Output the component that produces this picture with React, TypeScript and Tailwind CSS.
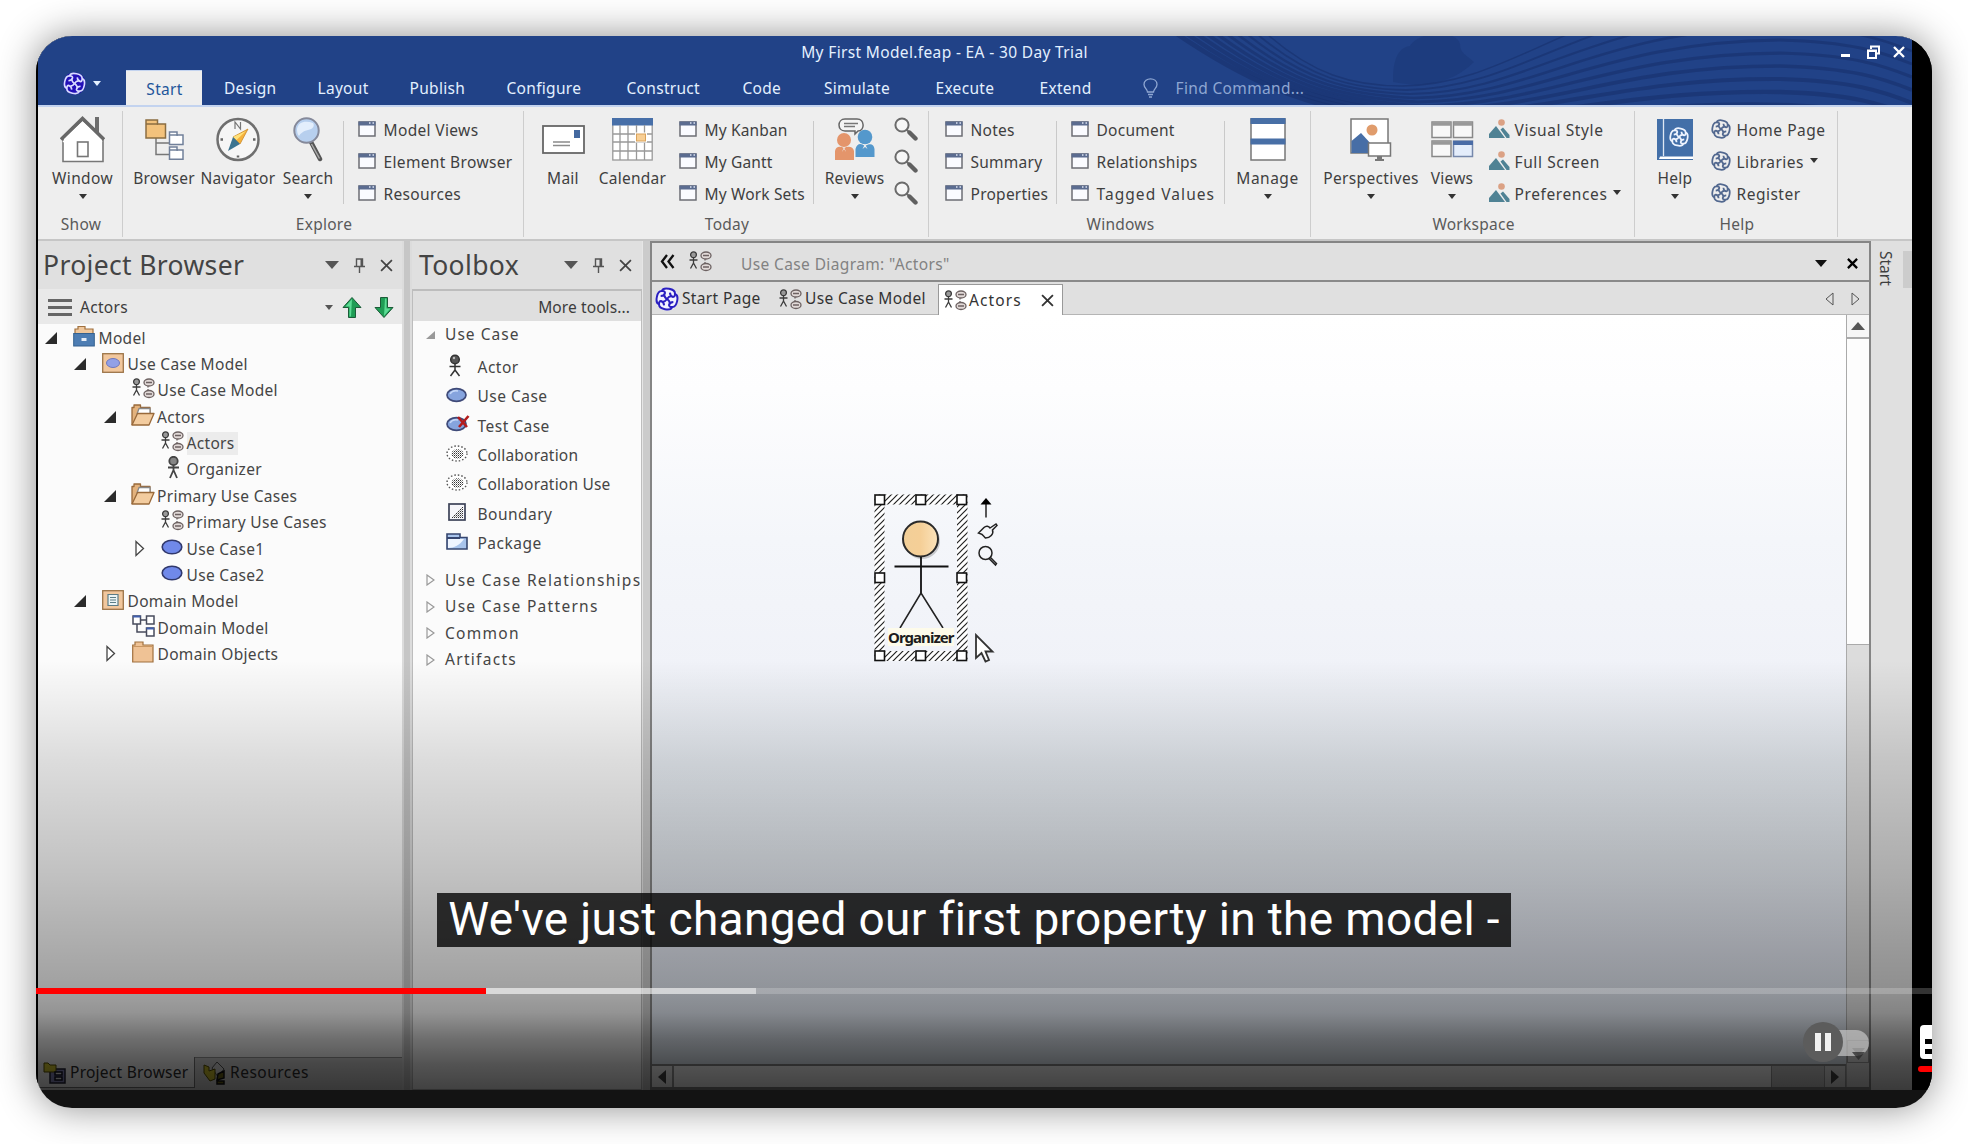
import React from "react";

/* ---------- icons ---------- */

function Swirl({ size, color, bg = "none", w = 1.9 }: { size: number; color: string; bg?: string; w?: number }) {
  return (
    <svg width={size} height={size} viewBox="0 0 24 24" fill="none" stroke={color} strokeWidth={w} strokeLinejoin="round">
      <circle cx="12" cy="12" r="11.5" fill={bg} stroke="none" />
      <g transform="rotate(12 12 12)">
        <path d="M5.300 5.300C5.800 0.400 18.200 0.400 18.700 5.300C23.600 5.800 23.600 18.200 18.700 18.700C18.200 23.600 5.800 23.600 5.300 18.700C0.400 18.200 0.400 5.800 5.300 5.300Z" />
        {[0, 90, 180, 270].map((a) => (
          <path key={a} transform={`rotate(${a} 12 12)`} d="M12 12C13.500 8.500 15.500 8 17.500 8.800M18.700 5.300C19.300 7 18.800 8.500 17.500 8.800C15.500 8.600 14 7 13.500 5.200" />
        ))}
      </g>
    </svg>
  );
}

const Caret = ({ className = "" }: { className?: string }) => (
  <svg className={className} width="8" height="5" viewBox="0 0 8 5"><path d="M0 0H8L4 5Z" fill="currentColor" /></svg>
);

const WinIcon = () => (
  <svg width="18" height="16" viewBox="0 0 18 16">
    <rect x="1" y="1" width="16" height="14" fill="#fafbff" stroke="#6c6e74" strokeWidth="1.500" />
    <path d="M0.500 0.500H17.500V4.500H0.500Z" fill="#5b6c90" />
    <path d="M11 2H12.500M14.500 2H16" stroke="#dfe5f2" strokeWidth="1.300" />
  </svg>
);

const Picture = () => (
  <svg width="21" height="20" viewBox="0 0 21 20">
    <circle cx="12.500" cy="3.500" r="3.300" fill="#dba184" />
    <path d="M0 19V15L7 7L16 19Z" fill="#4f8294" />
    <path d="M11.500 10.500L14 8.500L20.500 16V19H17.500Z" fill="#4f8294" />
  </svg>
);

const House = () => (
  <svg width="45" height="47" viewBox="0 0 45 47" fill="none">
    <path d="M35 17V1H39V20Z" fill="#6d6d6d" />
    <path d="M3 22V45.500H43V22L22.500 4Z" fill="#fff" stroke="#777" strokeWidth="1.600" />
    <path d="M1 23.500L22.500 2.500L44 23.500" stroke="#686868" strokeWidth="3.400" />
    <path d="M3 26L22.500 7L42 26" stroke="#fff" strokeWidth="1.200" />
    <rect x="17.500" y="26" width="10.500" height="14.500" fill="#fff" stroke="#777" strokeWidth="1.600" />
  </svg>
);

const BrowserIcon = () => (
  <svg width="39" height="41" viewBox="0 0 39 41" fill="none" strokeWidth="1.500">
    <path d="M11 19V35.500H24M11 24H24" stroke="#777" />
    <path d="M1 1H12.500V5H20.500V19H1Z" fill="#f3c27c" stroke="#8b6d42" />
    <path d="M1 5H13" stroke="#8b6d42" />
    <path d="M24.500 13H32V16H38V25.500H24.500Z" fill="#fff" stroke="#71809a" />
    <path d="M24.500 16H33" stroke="#71809a" />
    <path d="M24.500 28H32V31H38V40.300H24.500Z" fill="#fff" stroke="#71809a" />
    <path d="M24.500 31H33" stroke="#71809a" />
  </svg>
);

const Compass = () => (
  <svg width="44" height="45" viewBox="0 0 44 45" fill="none">
    <circle cx="22" cy="22.500" r="20.500" fill="#f6f6f6" stroke="#6f6f6f" strokeWidth="2.500" />
    <path d="M19 12V5L24.500 12V5" stroke="#777" strokeWidth="1.200" />
    <path d="M32 12L17 20L24 27Z" fill="#f6b23c" stroke="#c98a2b" strokeWidth="0.800" />
    <path d="M30 14L20.500 23L17 20Z" fill="#ffe27a" />
    <path d="M12 34L17 20L24 27Z" fill="#3c7490" />
    <path d="M4.500 22.500H7M37 22.500H39.500M22 38.500V40.500" stroke="#666" strokeWidth="2.500" />
  </svg>
);

const SearchBig = () => (
  <svg width="32" height="45" viewBox="0 0 32 45" fill="none">
    <path d="M19 25L28 42" stroke="#555" strokeWidth="4.500" strokeLinecap="round" />
    <path d="M19.500 27L27.500 41.500" stroke="#aaa" strokeWidth="1.500" />
    <circle cx="14.500" cy="13.500" r="12.200" fill="#b7cfee" stroke="#85899a" strokeWidth="2" />
    <path d="M5 12C6 5 13 3 21 6C23 9 21 12 16 13C11 14 8 17 7 19C5.500 17 5 15 5 12Z" fill="#e3eefc" />
  </svg>
);

const MailIcon = () => (
  <svg width="43" height="29" viewBox="0 0 43 29">
    <rect x="1" y="1" width="41" height="27" fill="#fff" stroke="#666" strokeWidth="1.800" />
    <rect x="32" y="5" width="6" height="8" fill="#44699f" />
    <path d="M11 17H28M11 20.500H28" stroke="#8b8b8b" strokeWidth="1.300" />
  </svg>
);

const CalendarIcon = () => (
  <svg width="41" height="43" viewBox="0 0 41 43">
    <rect x="0.800" y="1" width="39.400" height="41" fill="#fff" stroke="#999" strokeWidth="1.300" />
    <path d="M0 0H41V7.500H0Z" fill="#476fa8" />
    <path d="M8 7V42M16 7V42M24.500 7V42M32.500 7V42M1 16H40M1 24H40M1 33H40" stroke="#999" strokeWidth="1.300" />
    <rect x="23" y="14.500" width="12" height="10" fill="#fff" />
    <rect x="24.500" y="16" width="9" height="7" fill="#f8cf95" stroke="#d9a25b" />
  </svg>
);

const ReviewsIcon = () => (
  <svg width="40" height="42" viewBox="0 0 40 42" fill="none">
    <path d="M10 1H22C30 1 30 13 23 13L20 16V13H10C2 13 2 1 10 1Z" fill="#f4f4f4" stroke="#666" strokeWidth="1.500" />
    <path d="M9 5.500H23M9 8.500H20" stroke="#777" strokeWidth="1.300" />
    <circle cx="9" cy="22" r="7" fill="#e4956b" />
    <path d="M0 42V33C1 28 5 28 9 30C13 28 18 28 19 33V42Z" fill="#e4956b" />
    <circle cx="30" cy="19" r="7.300" fill="#5498cc" />
    <path d="M20.500 39V31C22 25 26 25 30 28C35 25 39 26 39.500 31V39Z" fill="#5498cc" />
    <path d="M9 29L7 34L9 31L11 34ZM30 26L27.500 31L30 29L32.500 31Z" fill="#eee" />
  </svg>
);

const Mag = () => (
  <svg width="24" height="24" viewBox="0 0 24 24" fill="none">
    <circle cx="8" cy="8" r="6.600" fill="#f6f6f6" stroke="#6b6b6b" strokeWidth="2" />
    <path d="M12.500 12.500L15 15" stroke="#6b6b6b" strokeWidth="2" />
    <path d="M15.500 15.500L21.500 21.500" stroke="#606060" strokeWidth="4.400" strokeLinecap="round" />
  </svg>
);

const ManageIcon = () => (
  <svg width="36" height="43" viewBox="0 0 36 43">
    <rect x="1" y="1" width="34" height="41" fill="#fff" stroke="#777" strokeWidth="1.500" />
    <path d="M0.500 0H35.500V6H0.500ZM0.500 20.500H35.500V26.500H0.500Z" fill="#486fa6" />
  </svg>
);

const PerspectivesIcon = () => (
  <svg width="42" height="43" viewBox="0 0 42 43">
    <rect x="1" y="1" width="37" height="34" fill="#fff" stroke="#777" strokeWidth="1.500" />
    <circle cx="22" cy="12" r="5.500" fill="#e09c6c" />
    <path d="M1.500 35V23L11 15L22 27V35Z" fill="#476ea6" />
    <rect x="18.500" y="25" width="22" height="13" fill="#fff" stroke="#777" strokeWidth="1.500" />
    <path d="M27 38H32V41H34V43H25V41H27Z" fill="#777" />
  </svg>
);

const ViewsIcon = () => (
  <svg width="43" height="37" viewBox="0 0 43 37" strokeWidth="1.500">
    <rect x="1" y="1" width="19" height="15.500" fill="#f8f8f8" stroke="#888" />
    <rect x="22.500" y="1" width="19" height="15.500" fill="#f8f8f8" stroke="#888" />
    <rect x="1" y="20" width="19" height="15.500" fill="#f8f8f8" stroke="#888" />
    <rect x="22.500" y="20" width="19" height="15.500" fill="#e4edfb" stroke="#7688ab" />
    <path d="M1 3H20M22.500 3H41.500M1 22H20" stroke="#999" strokeWidth="3.500" />
    <path d="M22 22H42" stroke="#4a6ca6" strokeWidth="4" />
  </svg>
);

const BookIcon = () => (
  <div className="relative h-[41px] w-9">
    <svg className="absolute inset-0" width="36" height="41" viewBox="0 0 36 41">
      <path d="M0 0H36V41H0Z" fill="#436fa8" />
      <path d="M6.500 0V37" stroke="#dfe7f3" strokeWidth="1.300" />
      <path d="M3 37.500H36V40H2Z" fill="#fff" />
    </svg>
    <div className="absolute left-[11.500px] top-2"><Swirl size={20} color="#eef4ff" w={2.1} /></div>
  </div>
);

const DiagramIcon = () => (
  <svg width="23" height="21" viewBox="0 0 23 21" fill="none" stroke="#3c3c3c" strokeWidth="1.300">
    <circle cx="4.500" cy="3.800" r="2.900" fill="#999" />
    <path d="M4.500 7V12.500M0.500 9H8.500M4.500 12L1.500 17.500M4.500 12L7.500 17.500" />
    <g stroke="#6d6262"><ellipse cx="17" cy="4.500" rx="5" ry="3.500" fill="#e2dad8" /><ellipse cx="17" cy="16" rx="5" ry="3.500" fill="#e2dad8" /><path d="M14 4.500H20M14 16H20M16 8V9.500M16 11V12.500" /></g>
  </svg>
);

const ModelIcon = () => (
  <svg width="22" height="22" viewBox="0 0 22 22">
    <path d="M2 9V4H5V1.500H12V4H20V9Z" fill="#efc79c" stroke="#a0713f" strokeWidth="1.200" />
    <rect x="0.700" y="8.500" width="20.600" height="12.500" fill="#4d7db3" stroke="#34618f" />
    <path d="M8.500 13H13.500V16H8.500Z" fill="#e7eef7" />
  </svg>
);
const UcPkg = () => (
  <svg width="22" height="20" viewBox="0 0 22 20">
    <rect x="0.700" y="0.700" width="20.600" height="18.600" fill="#f1c79d" stroke="#9c7448" strokeWidth="1.300" />
    <ellipse cx="11" cy="10" rx="6.500" ry="4.500" fill="#92a0e6" stroke="#7078bb" />
  </svg>
);
const DmPkg = () => (
  <svg width="22" height="20" viewBox="0 0 22 20">
    <rect x="0.700" y="0.700" width="20.600" height="18.600" fill="#f1c79d" stroke="#9c7448" strokeWidth="1.300" />
    <path d="M6 4.500H16V15.500H6Z" fill="#eaf4f4" stroke="#5b7c86" strokeWidth="1.200" />
    <path d="M8 7.500H14M8 10H14M8 12.500H14" stroke="#5b7c86" strokeWidth="1.200" />
  </svg>
);
const OpenFolder = () => (
  <svg width="24" height="22" viewBox="0 0 24 22" strokeWidth="1.300" stroke="#99693a" strokeLinejoin="round">
    <path d="M1 21V3.500H3V1H9.500V3.500H19V10" fill="#e3b27d" />
    <path d="M8 4.500H19V10H6Z" fill="#fff" stroke="#888" />
    <path d="M1 21L6.500 9.500H23L18 21Z" fill="#f3cc9f" />
  </svg>
);
const Folder = () => (
  <svg width="22" height="22" viewBox="0 0 22 22">
    <path d="M0.700 21V4H3V1H11V4H21V21Z" fill="#efc295" stroke="#a0713f" strokeWidth="1.200" />
    <path d="M1 5.500H21" stroke="#c99763" strokeWidth="1" />
  </svg>
);
const Person = () => (
  <svg className="ml-[6px]" width="13" height="23" viewBox="0 0 13 23" fill="none" stroke="#444" strokeWidth="1.800">
    <circle cx="6.500" cy="5" r="4.200" fill="#858585" />
    <path d="M6.500 9V15M1 11.500H12M6.500 14L3 22M6.500 14L10 22" />
  </svg>
);
const Oval = () => (
  <svg width="22" height="16" viewBox="0 0 22 16"><ellipse cx="11" cy="8" rx="9.800" ry="6.800" fill="#7089ea" stroke="#30386c" strokeWidth="1.600" /></svg>
);
const ClassDiagram = () => (
  <svg width="23" height="22" viewBox="0 0 23 22" fill="#fff" stroke="#474b5c" strokeWidth="1.500">
    <path d="M9 5H15M5 9V17H14" fill="none" />
    <rect x="1" y="1" width="7.500" height="8" /><rect x="14.500" y="1" width="7.500" height="8" /><rect x="14.500" y="13" width="7.500" height="8" />
    <path d="M1 1.500H8.500M14.500 13.500H22" stroke="#405fae" strokeWidth="2" />
  </svg>
);

const ActorTool = () => (
  <svg className="ml-[3px]" width="12" height="23" viewBox="0 0 12 23" fill="none" stroke="#333" strokeWidth="1.500">
    <circle cx="6" cy="5.500" r="4.300" fill="#565656" /><circle cx="5" cy="4" r="1.200" fill="#bbb" stroke="none" />
    <path d="M6 10V16M0.500 12.500H11.500M6 16L1.500 22M6 16L10.500 22" />
  </svg>
);
const UseCaseTool = ({ test = false }: { test?: boolean }) => (
  <svg width="24" height="17" viewBox="0 0 24 17">
    <ellipse cx="10.500" cy="9" rx="9.500" ry="6.300" fill="#86a4de" stroke="#3f4a78" strokeWidth="1.700" />
    <path d="M4 8C6 4.500 10 4.500 12 5" stroke="#c6d8f8" strokeWidth="1.500" fill="none" />
    {test && <path d="M12 2L21 12M22.500 1L13 12" stroke="#b31c1c" strokeWidth="2.600" />}
  </svg>
);
const CollabTool = () => (
  <svg width="24" height="17" viewBox="0 0 24 17">
    <defs><pattern id="dots" width="2" height="2" patternUnits="userSpaceOnUse"><rect width="1" height="1" fill="#333" /><rect x="1" y="1" width="1" height="1" fill="#999" /></pattern></defs>
    <ellipse cx="11" cy="8.500" rx="10" ry="7.500" fill="#fff" stroke="#555" strokeWidth="1.400" strokeDasharray="1.500 2" />
    <ellipse cx="11.500" cy="9" rx="6" ry="4.800" fill="url(#dots)" />
  </svg>
);
const BoundaryTool = () => (
  <svg className="ml-[2px]" width="18" height="18" viewBox="0 0 18 18">
    <rect x="1" y="1" width="16" height="16" fill="#f6f6fa" stroke="#3c4257" strokeWidth="1.700" />
    <path d="M15 3V15H3Z" fill="url(#dots)" />
  </svg>
);
const PackageTool = () => (
  <svg width="22" height="17" viewBox="0 0 22 17">
    <path d="M1 16V1H14V4.500H21V16Z" fill="#a8c4ec" stroke="#36466f" strokeWidth="1.600" />
    <path d="M2 15V6H18C14 12 8 15 2 15Z" fill="#eff5ff" /><path d="M1 5H14" stroke="#36466f" strokeWidth="2" />
  </svg>
);

const PinIcon = () => (
  <svg width="11" height="15" viewBox="0 0 11 15" fill="none" stroke="#555" strokeWidth="1.400"><path d="M2.500 8V1H8.500V8M0 8.500H11M5.500 8.500V15M7.200 1V8" /></svg>
);
const XIcon = ({ size = 13, w = 2 }: { size?: number; w?: number }) => (
  <svg width={size} height={size} viewBox="0 0 12 12" fill="none" stroke="currentColor" strokeWidth={w}><path d="M1 1L11 11M11 1L1 11" /></svg>
);
const Tri = ({ open }: { open: boolean }) =>
  open ? (
    <svg width="12" height="12" viewBox="0 0 12 12"><path d="M12 0V12H0Z" fill="#2b2b2b" /></svg>
  ) : (
    <svg className="ml-px" width="12" height="17" viewBox="0 0 12 17"><path d="M2 1.500V15.500L9.500 8.500Z" fill="#fff" stroke="#444" strokeWidth="1.300" /></svg>
  );
const GreenArrow = ({ down = false }: { down?: boolean }) => (
  <svg className={down ? "rotate-180" : ""} width="20" height="21" viewBox="0 0 20 21">
    <path d="M10 0.500L19 10.500H13.500V20.500H6.500V10.500H1Z" fill="#1f9d55" stroke="#1b5c38" />
    <path d="M10 2L3.500 9.500H7.500V19.500H9Z" fill="#5bdb94" />
  </svg>
);

/* ---------- ribbon ---------- */

function Big({ icon, label, className, caret = false }: { icon: React.ReactNode; label: string; className: string; caret?: boolean }) {
  return (
    <div className={`flex shrink-0 flex-col items-center ${className}`}>
      <div className="flex h-12 items-center justify-center">{icon}</div>
      <span className="mt-[3px] whitespace-nowrap leading-6">{label}</span>
      {caret && <Caret className="mt-1 text-[#333]" />}
    </div>
  );
}

function List({ icon, items, className }: { icon: React.ReactNode; items: string[]; className: string }) {
  return (
    <div className={`flex shrink-0 flex-col ${className}`}>
      {items.map((t) => (
        <div key={t} className="flex h-8 items-center whitespace-nowrap">
          <span className="mb-1 w-[25.500px]">{icon}</span>
          <span className={t === "Tagged Values" ? "tracking-[1.050px]" : ""}>{t}</span>
          {(t === "Preferences" || t === "Libraries") && <Caret className="mb-[5px] ml-[6px] text-[#333]" />}
        </div>
      ))}
    </div>
  );
}

const Sep = () => <div className="mt-[6px] h-[83px] w-px shrink-0 bg-[#c9c9c9]" />;

function Group({ label, className, children }: { label: string; className: string; children: React.ReactNode }) {
  return (
    <div className={`flex shrink-0 flex-col ${className}`}>
      <div className="mt-1 flex h-[126px] flex-col border-r border-[#cdcdcd]">
        <div className="flex h-[100px] shrink-0 pt-[4px]">{children}</div>
        <div className="-mt-[2px] pl-[2px] text-center leading-[30px] text-[#5a5a5a]">{label}</div>
      </div>
    </div>
  );
}

function Ribbon() {
  return (
    <div className="flex h-[136px] shrink-0 overflow-hidden border-b-2 border-t-2 border-b-[#c6c6c6] border-t-[#c3d3ef] bg-[#eeeeee]">
      <Group label="Show" className="w-[85px]">
        <Big icon={<House />} label="Window" className="ml-[7px] w-[75px] tracking-[0.350px]" caret />
      </Group>
      <Group label="Explore" className="w-[401px]">
        <Big icon={<BrowserIcon />} label="Browser" className="ml-[7px] w-[68px]" />
        <Big icon={<Compass />} label="Navigator" className="w-20 tracking-[0.350px]" />
        <Big icon={<SearchBig />} label="Search" className="mr-[5px] w-[60px]" caret />
        <Sep />
        <List icon={<WinIcon />} items={["Model Views", "Element Browser", "Resources"]} className="ml-[14px] tracking-[0.350px]" />
      </Group>
      <Group label="Today" className="w-[405px]">
        <Big icon={<MailIcon />} label="Mail" className="ml-[9px] w-[60px]" />
        <Big icon={<CalendarIcon />} label="Calendar" className="w-[79px]" />
        <List icon={<WinIcon />} items={["My Kanban", "My Gantt", "My Work Sets"]} className="ml-[7px] w-[134px] tracking-[0.150px]" />
        <Sep />
        <Big icon={<ReviewsIcon />} label="Reviews" className="ml-[5px] w-[71px]" caret />
        <div className="ml-[4px] flex flex-col gap-2 pt-[2px]"><Mag /><Mag /><Mag /></div>
      </Group>
      <Group label="Windows" className="w-[382px]">
        <List icon={<WinIcon />} items={["Notes", "Summary", "Properties"]} className="ml-4 w-[111px]" />
        <Sep />
        <List icon={<WinIcon />} items={["Document", "Relationships", "Tagged Values"]} className="ml-[14px] w-[153px]" />
        <Sep />
        <Big icon={<ManageIcon />} label="Manage" className="ml-[7px] w-[71px] tracking-[0.500px]" caret />
      </Group>
      <Group label="Workspace" className="w-[324px]">
        <Big icon={<PerspectivesIcon />} label="Perspectives" className="ml-[9px] w-[102px] tracking-[0.350px]" caret />
        <Big icon={<ViewsIcon />} label="Views" className="w-[60px]" caret />
        <List icon={<Picture />} items={["Visual Style", "Full Screen", "Preferences"]} className="ml-[7px] tracking-[0.600px]" />
      </Group>
      <Group label="Help" className="w-[203px]">
        <Big icon={<BookIcon />} label="Help" className="ml-[10px] w-[60px]" caret />
        <List icon={<Swirl size={20} color="#52688f" w={2.1} />} items={["Home Page", "Libraries", "Register"]} className="ml-[6px] tracking-[0.500px]" />
      </Group>
    </div>
  );
}

const TABS: [string, string][] = [
  ["Design", "w-[93.500px]"],
  ["Layout", "w-[92px]"],
  ["Publish", "w-[97px]"],
  ["Configure", "w-[120px]"],
  ["Construct", "w-[116px]"],
  ["Code", "w-[81.500px]"],
  ["Simulate", "w-[111.500px]"],
  ["Execute", "w-[104px]"],
  ["Extend", "w-[103px]"],
];

function Header() {
  return (
    <div className="relative flex h-[69px] shrink-0 flex-col overflow-hidden bg-[#214287] text-[#e3f0ff]">
      <svg className="absolute right-0 top-0 overflow-visible" width="660" height="69" viewBox="0 0 660 69" fill="none" stroke="#17306c" strokeOpacity="0.6">
        <path d="M141 46C141 25 145 12 158 10C168 -6 205 -6 208 8C208 18 216 20 222 26C200 48 170 52 141 46Z" fill="#17306c" fillOpacity="0.35" stroke="none" />
        {[0, 1, 2, 3, 4, 5, 6, 7, 8, 9].map((i) => (
          <path
            key={i}
            strokeWidth={1.5 + i * 0.35}
            d={`M${15 - i * 10} -2C${60 - i * 4} ${38 + i * 3} ${100 - i * 2} ${50 + i * 3} ${150 + i * 4} ${50 + i * 4}C${270 + i * 6} ${48 + i * 4} ${320 + i * 8} ${-42 + i * 12} ${528} ${-48 + i * 13}C600 ${-46 + i * 13} 630 ${-36 + i * 13} 660 ${-24 + i * 13}`}
          />
        ))}
      </svg>
      <div className="relative flex h-[34px] items-center">
        <div className="flex-1 pl-[10px] text-center leading-8 tracking-[0.350px]">
          <span className="relative -top-px">My First Model.feap - EA - 30 Day Trial</span>
        </div>
        <div className="flex w-[71px] items-center gap-[17px] pb-[2px] text-white">
          <div className="mt-[7px] h-[3px] w-[9px] bg-white" />
          <svg width="13" height="14" viewBox="0 0 13 14" fill="none" stroke="#fff" strokeWidth="2"><path d="M4 4V1.500H12V8.500H9M1 5.500H9V13H1ZM1 6H9" /></svg>
          <span className="-ml-1"><XIcon size={12} w={2.3} /></span>
        </div>
      </div>
      <div className="relative flex h-[35px] leading-[37px] tracking-[0.300px]">
        <div className="flex w-[88px] items-center pb-2 pl-[25px]">
          <Swirl size={23} color="#d9dcff" bg="#2310b8" w={1.7} />
          <Caret className="ml-[7px]" />
        </div>
        <div className="w-[76px] border-t border-[#c3d3ef] bg-[#eeeeee] pl-px text-center leading-[36px] text-[#1f569b]">Start</div>
        <div className="w-[22px]" />
        {TABS.map(([t, w]) => (
          <div key={t} className={w}>{t}</div>
        ))}
        <svg className="mt-[8px]" width="15" height="20" viewBox="0 0 15 20" fill="none" stroke="#8ea6d2" strokeWidth="1.300"><path d="M4.500 14C4.500 11 1 10 1 6.500C1 -1 14 -1 14 6.500C14 10 10.500 11 10.500 14ZM5 16.500H10M6 19H9" /></svg>
        <span className="ml-[18px] tracking-[0.350px] text-[#8ea6d2]">Find Command...</span>
      </div>
    </div>
  );
}

/* ---------- side panels ---------- */

function PanelTitle({ title, className = "" }: { title: string; className?: string }) {
  return (
    <div className={`flex h-12 shrink-0 items-center bg-[#e0e0e0] text-[#444] ${className}`}>
      <span className="flex-1 whitespace-nowrap pt-px text-[26.500px] leading-none tracking-[0.350px]">{title}</span>
      <div className="flex items-center gap-[15px]">
        <svg width="14" height="8" viewBox="0 0 14 8"><path d="M0 0H14L7 8Z" fill="#555" /></svg>
        <PinIcon />
        <XIcon w={1.6} />
      </div>
    </div>
  );
}

const D = <DiagramIcon />;
const TREE: { label: string; indent: string; tri?: "open" | "closed"; icon: React.ReactNode; sel?: boolean }[] = [
  { label: "Model", indent: "pl-[7px]", tri: "open", icon: <ModelIcon /> },
  { label: "Use Case Model", indent: "pl-[36px]", tri: "open", icon: <UcPkg /> },
  { label: "Use Case Model", indent: "pl-[66px]", icon: D },
  { label: "Actors", indent: "pl-[65.500px]", tri: "open", icon: <OpenFolder /> },
  { label: "Actors", indent: "pl-[95px]", icon: D, sel: true },
  { label: "Organizer", indent: "pl-[95px]", icon: <Person /> },
  { label: "Primary Use Cases", indent: "pl-[65.500px]", tri: "open", icon: <OpenFolder /> },
  { label: "Primary Use Cases", indent: "pl-[95px]", icon: D },
  { label: "Use Case1", indent: "pl-[95px]", tri: "closed", icon: <Oval /> },
  { label: "Use Case2", indent: "pl-[95px]", icon: <Oval /> },
  { label: "Domain Model", indent: "pl-[36px]", tri: "open", icon: <DmPkg /> },
  { label: "Domain Model", indent: "pl-[66px]", icon: <ClassDiagram /> },
  { label: "Domain Objects", indent: "pl-[66px]", tri: "closed", icon: <Folder /> },
];

function ProjectBrowser() {
  return (
    <div className="flex w-[364px] shrink-0 flex-col bg-[#fbfbfb]">
      <PanelTitle title="Project Browser" className="pl-[5px] pr-[9px]" />
      <div className="flex h-[35px] shrink-0 items-center bg-[#e9e9e9] pl-[10px] pr-[8px] pt-px text-[#3c3c3c]">
        <div className="flex w-6 flex-col gap-1"><i className="h-[3px] bg-[#666]" /><i className="h-[3px] bg-[#666]" /><i className="h-[3px] bg-[#666]" /></div>
        <span className="ml-2 flex-1 pt-px tracking-[0.300px]">Actors</span>
        <Caret className="mr-[9px] text-[#555]" />
        <GreenArrow />
        <span className="ml-3"><GreenArrow down /></span>
      </div>
      <div className="flex flex-1 flex-col pt-[0.500px]">
        {TREE.map((r, i) => (
          <div key={i} className={`flex h-[26.360px] shrink-0 items-center whitespace-nowrap tracking-[0.320px] text-[#454545] ${r.indent}`}>
            <span className="w-[27.500px]">{r.tri && <Tri open={r.tri === "open"} />}</span>
            <span className="mb-[3px] w-[26px] shrink-0">{r.icon}</span>
            <span className={`mt-px pr-[3px] leading-[23px] ${r.sel ? "bg-[#ececec]" : ""}`}>{r.label}</span>
          </div>
        ))}
      </div>
      <div className="flex h-[33px] shrink-0 bg-[#d6d6d6] pb-[2px] text-[#2c2c2c]">
        <div className="flex w-[157px] items-center border-b border-r border-[#777] bg-[#fbfbfb] pl-[5px]">
          <svg width="23" height="23" viewBox="0 0 23 23"><path d="M7 8H22V22H7Z" fill="#8a8ac0" stroke="#223" strokeWidth="1.500" /><path d="M1 2H5L7 4H13V11H1Z" fill="#d8cc30" stroke="#554d00" /><path d="M12 11H19V14H12ZM12 16H19V19H12Z" fill="#eee" stroke="#112" strokeWidth="1.500" /></svg>
          <span className="ml-1 whitespace-nowrap pt-px">Project Browser</span>
        </div>
        <div className="flex flex-1 items-center border-t border-[#999] pl-2">
          <svg width="23" height="24" viewBox="0 0 23 24"><path d="M9 7L14 1L21 8L15 16Z" fill="#ddd" stroke="#555" /><path d="M1 4L6 6V10L12 8V18L7 20L1 12Z" fill="#cfc22e" stroke="#554d00" /><path d="M15 13L21 10V17L14 19ZM14 20H21V23H14Z" fill="#6b6414" stroke="#111" strokeWidth="1.500" /></svg>
          <span className="ml-1 tracking-[0.500px]">Resources</span>
        </div>
      </div>
    </div>
  );
}

const TOOLS: [string, React.ReactNode][] = [
  ["Actor", <ActorTool />],
  ["Use Case", <UseCaseTool />],
  ["Test Case", <UseCaseTool test />],
  ["Collaboration", <CollabTool />],
  ["Collaboration Use", <CollabTool />],
  ["Boundary", <BoundaryTool />],
  ["Package", <PackageTool />],
];

function Toolbox() {
  return (
    <div className="flex w-[230px] shrink-0 flex-col bg-[#e0e0e0]">
      <PanelTitle title="Toolbox" className="pl-[7px] pr-[10px]" />
      <div className="flex flex-1 flex-col overflow-hidden border border-t-2 border-[#bdbdbd] bg-[#fbfbfb] text-[#454545]">
        <div className="h-[30px] shrink-0 bg-[#dfdfdf] pr-[11px] text-right leading-[32px] tracking-[0.100px] text-[#3c3c3c]">More tools...</div>
        <div className="-mt-px flex h-[29px] shrink-0 items-center pl-[13px]">
          <svg width="9" height="8" viewBox="0 0 9 8"><path d="M9 0V8H0Z" fill="#999" /></svg>
          <span className="ml-[10px] tracking-[1.050px]">Use Case</span>
        </div>
        <div className="mt-[4px] flex flex-col">
          {TOOLS.map(([t, icon]) => (
            <div key={t} className="flex h-[29.330px] items-center whitespace-nowrap pl-[33px]">
              <span className="mb-[5px] w-[31.500px]">{icon}</span>
              <span className={t.startsWith("Coll") ? "tracking-[0.200px]" : "tracking-[0.480px]"}>{t}</span>
            </div>
          ))}
        </div>
        <div className="mt-[9px] flex flex-col">
          {["Use Case Relationships", "Use Case Patterns", "Common", "Artifacts"].map((t) => (
            <div key={t} className="flex h-[26.400px] items-center whitespace-nowrap pl-[13px]">
              <svg className="shrink-0" width="9" height="12" viewBox="0 0 9 12"><path d="M1 1V11L8 6Z" fill="none" stroke="#999" strokeWidth="1.200" /></svg>
              <span className="ml-[10px] tracking-[1.300px]">{t}</span>
            </div>
          ))}
        </div>
      </div>
    </div>
  );
}

/* ---------- diagram window ---------- */

const HANDLES = [[0, 0], [41, 0], [82, 0], [0, 78], [82, 78], [0, 156], [41, 156], [82, 156]];

function Diagram() {
  return (
    <div className="relative flex-1 bg-[linear-gradient(180deg,#ffffff_0%,#fdfdfe_10%,#f4f6fa_30%,#f0f2f8_47%,#e9eef4_60%,#e5eaf0_72%,#e4e8f2_85%,#dfe7f0_100%)]">
      <svg className="absolute left-[222px] top-[179px]" width="94" height="168" viewBox="0 0 94 168" fill="none">
        <defs>
          <pattern id="hatch" width="6" height="6" patternUnits="userSpaceOnUse"><rect width="6" height="6" fill="#fff" /><path d="M-1 7L7 -1M-1 1L1 -1M5 7L7 5" stroke="#222" strokeWidth="1.200" /></pattern>
          <linearGradient id="head" x1="0" x2="1"><stop offset="0" stopColor="#f2cf98" /><stop offset="0.500" stopColor="#f5cf97" /><stop offset="1" stopColor="#fbe3bb" /></linearGradient>
        </defs>
        <path d="M0.500 0.500H93.500V167H0.500ZM10.500 10.500V157H83V10.500Z" fill="url(#hatch)" fillRule="evenodd" />
        <circle cx="48" cy="47" r="18" fill="#000" opacity="0.180" />
        <circle cx="46.500" cy="45" r="17.500" fill="url(#head)" stroke="#2a2a2a" strokeWidth="2" />
        <path d="M47 63V100M20.500 72.500H74.500" stroke="#111" strokeWidth="1.800" />
        <path d="M47 99L26 134M47 99L69 134" stroke="#222" strokeWidth="1.500" />
        {HANDLES.map(([x, y]) => <rect key={`${x}-${y}`} x={x + 1} y={y + 1} width="9.500" height="9.500" fill="#fff" stroke="#111" strokeWidth="1.600" />)}
      </svg>
      <span className="absolute left-[236px] top-[313px] bg-[#fdfbea] text-[15px] font-bold leading-[18px] tracking-[-0.950px] text-[#1c1c1c]">Organizer</span>
      <svg className="absolute left-[325px] top-[183px]" width="22" height="70" viewBox="0 0 22 70" fill="none" stroke="#222" strokeWidth="1.500">
        <path d="M9 5V19.500" /><path d="M9 0L14.500 6.500H3.500Z" fill="#000" stroke="none" />
        <path d="M1.500 35L7 29.500C9 27.500 12 28 13 30L19 26L20 27.500L15.500 32C17 36 13 40 8.500 40C6 38.500 8 37 1.500 35Z" />
        <circle cx="8.500" cy="55" r="6.500" /><path d="M13 59L19.500 65.500L18.500 67L12 60.500" />
      </svg>
      <svg className="absolute left-[322px] top-[318px]" width="22" height="31" viewBox="0 0 22 31"><path d="M2 2V25L7.500 20L11.500 28.500L15 27L11.500 18.500H18.500Z" fill="#fff" stroke="#333" strokeWidth="1.800" /></svg>
    </div>
  );
}

function DocumentArea() {
  return (
    <div className="flex w-[1221px] shrink-0 flex-col border-2 border-b-[3px] border-[#858585] bg-[#e0e0e0]">
      <div className="flex h-[39px] shrink-0 items-center border-b-2 border-[#8a8a8a] pl-2 pr-[11px]">
        <svg width="15" height="15" viewBox="0 0 15 15" fill="none" stroke="#111" strokeWidth="2.300"><path d="M7 1L2 7.500L7 14M13.500 1L8.500 7.500L13.500 14" /></svg>
        <span className="ml-[14px]"><DiagramIcon /></span>
        <span className="ml-[29px] mt-[6px] flex-1 tracking-[0.380px] text-[#828282]">Use Case Diagram: "Actors"</span>
        <svg className="mt-1" width="12" height="7" viewBox="0 0 12 7"><path d="M0 0H12L6 7Z" fill="#111" /></svg>
        <span className="ml-5 mt-1 text-black"><XIcon size={11} w={2.5} /></span>
      </div>
      <div className="flex h-[33px] shrink-0 items-center border-b border-[#b5b5b5] pt-[2px] text-[#333]">
        <span className="ml-[3px]"><Swirl size={24} color="#2a1fc0" w={2} bg="#f2f2ff" /></span>
        <span className="ml-[3px] w-[97px] whitespace-nowrap tracking-[0.350px]">Start Page</span>
        <DiagramIcon />
        <span className="ml-[3px] w-[133px] whitespace-nowrap tracking-[0.350px]">Use Case Model</span>
        <div className="-mb-px flex h-[31px] w-[125px] items-center self-end border border-b-0 border-[#999] bg-white pl-[5px]">
          <DiagramIcon />
          <span className="ml-[2px] flex-1 pt-[2px] tracking-[1.100px]">Actors</span>
          <span className="mr-2"><XIcon size={13} w={1.7} /></span>
        </div>
        <div className="flex-1" />
        <svg width="9" height="14" viewBox="0 0 9 14" fill="none" stroke="#555"><path d="M8 1V13L1 7Z" /></svg>
        <svg className="ml-[17px] mr-[9px]" width="9" height="14" viewBox="0 0 9 14" fill="none" stroke="#555"><path d="M1 1V13L8 7Z" /></svg>
      </div>
      <div className="flex flex-1">
        <div className="flex w-[1194px] flex-col">
          <Diagram />
          <div className="flex h-[23px] shrink-0 border-t-2 border-[#8a8a8a] bg-[#c9c9c9]">
            <div className="flex w-[22px] items-center justify-center border-r-2 border-[#999] bg-[#f4f4f4]"><svg width="8" height="14" viewBox="0 0 8 14"><path d="M8 0V14L0 7Z" fill="#444" /></svg></div>
            <div className="w-[1098px] border-r border-[#999] bg-[#fafafa]" />
            <div className="ml-[52px] flex flex-1 items-center justify-center border-l border-r border-[#999] bg-[#dcdcdc]"><svg width="8" height="14" viewBox="0 0 8 14"><path d="M0 0V14L8 7Z" fill="#444" /></svg></div>
          </div>
        </div>
        <div className="flex flex-1 flex-col border-l border-[#aaa] bg-[#dcdcdc]">
          <div className="flex h-[24px] items-center justify-center border-b-2 border-[#aaa] bg-[#f6f6f6]"><svg width="14" height="8" viewBox="0 0 14 8"><path d="M7 0L14 8H0Z" fill="#555" /></svg></div>
          <div className="h-[306px] border-b border-[#aaa] bg-[#fdfdfd]" />
          <div className="flex-1" />
          <div className="mb-6 flex h-[23px] items-center justify-center border border-[#999]"><svg width="13" height="8" viewBox="0 0 13 8"><path d="M0 0H13L6.500 8Z" fill="#444" /></svg></div>
        </div>
      </div>
    </div>
  );
}

/* ---------- video player overlays ---------- */

function PlayerOverlay() {
  return (
    <>
      <div className="absolute inset-x-0 bottom-[18px] h-[430px] bg-[linear-gradient(180deg,rgba(0,0,0,0)_0%,rgba(0,0,0,0.030)_6%,rgba(0,0,0,0.120)_23%,rgba(0,0,0,0.230)_50%,rgba(0,0,0,0.320)_68%,rgba(0,0,0,0.370)_78%,rgba(0,0,0,0.410)_82%,rgba(0,0,0,0.560)_88%,rgba(0,0,0,0.670)_94%,rgba(0,0,0,0.740)_100%)]" />
      <div className="absolute left-[401px] top-[857px] flex h-[54px] w-[1074px] items-center justify-center whitespace-nowrap bg-[rgba(8,8,8,0.820)] pb-[2px] font-[Roboto] text-[46px] leading-none tracking-[0.330px] text-white">
        We've just changed our first property in the model -
      </div>
      <div className="absolute inset-x-0 top-[952px] flex h-[6px] bg-white/20">
        <div className="w-[450px] bg-[#ff0000]" />
        <div className="w-[270px] bg-white/50" />
      </div>
      <div className="absolute left-[1785px] top-[994px] h-[26px] w-[48px] rounded-full bg-[#c8c8c8]/70" />
      <svg className="absolute left-[1816px] top-[1016px]" width="13" height="8" viewBox="0 0 13 8"><path d="M0 0H13L6.500 8Z" fill="#222" fillOpacity="0.700" /></svg>
      <div className="absolute left-[1767px] top-[986px] flex h-10 w-10 items-center justify-center gap-[4px] rounded-full bg-[#5c5c5c]">
        <div className="h-[18px] w-[6px] bg-[#f1f1f1]" />
        <div className="h-[18px] w-[6px] bg-[#f1f1f1]" />
      </div>
      <div className="absolute left-[1884px] top-[989px] flex h-[34px] w-9 flex-col gap-[5px] rounded-[4px] bg-white pl-[5px] pt-[14px]">
        <div className="h-[5px] bg-black" />
        <div className="h-[5px] bg-black" />
      </div>
      <div className="absolute left-[1882px] top-[1030px] h-[6px] w-10 rounded-full bg-[#ff0000]" />
    </>
  );
}

export default function App() {
  return (
    <div className="h-[1144px] w-[1968px] overflow-hidden bg-white p-9 font-['Noto_Sans','Open_Sans',sans-serif] text-[15.500px] tracking-[0.250px] text-[#3f3f3f]">
      <div className="h-[1072px] w-[1896px] rounded-[36px] shadow-[0_0_38px_rgba(0,0,0,0.450)]">
        <div className="relative h-full overflow-hidden rounded-[36px] bg-[#131313]">
          <div className="flex h-[1054px] bg-black pl-[2px]">
            <div className="flex w-[1874px] flex-col bg-[#e0e0e0]">
              <Header />
              <Ribbon />
              <div className="flex flex-1">
                <ProjectBrowser />
                <div className="w-[10px] shrink-0 border-x-2 border-[#dcdcdc] bg-[#c6c6c6]" />
                <Toolbox />
                <div className="w-[8px] shrink-0 border-l border-[#e6e6e6] bg-[#cbcbcb]" />
                <DocumentArea />
                <div className="flex flex-1 items-start justify-between">
                  <span className="ml-[4px] mt-[10px] leading-[22px] tracking-normal [writing-mode:vertical-rl]">Start</span>
                  <div className="mt-[10px] h-[37px] w-[9px] bg-[#cccccc]" />
                </div>
              </div>
            </div>
          </div>
          <PlayerOverlay />
        </div>
      </div>
    </div>
  );
}
